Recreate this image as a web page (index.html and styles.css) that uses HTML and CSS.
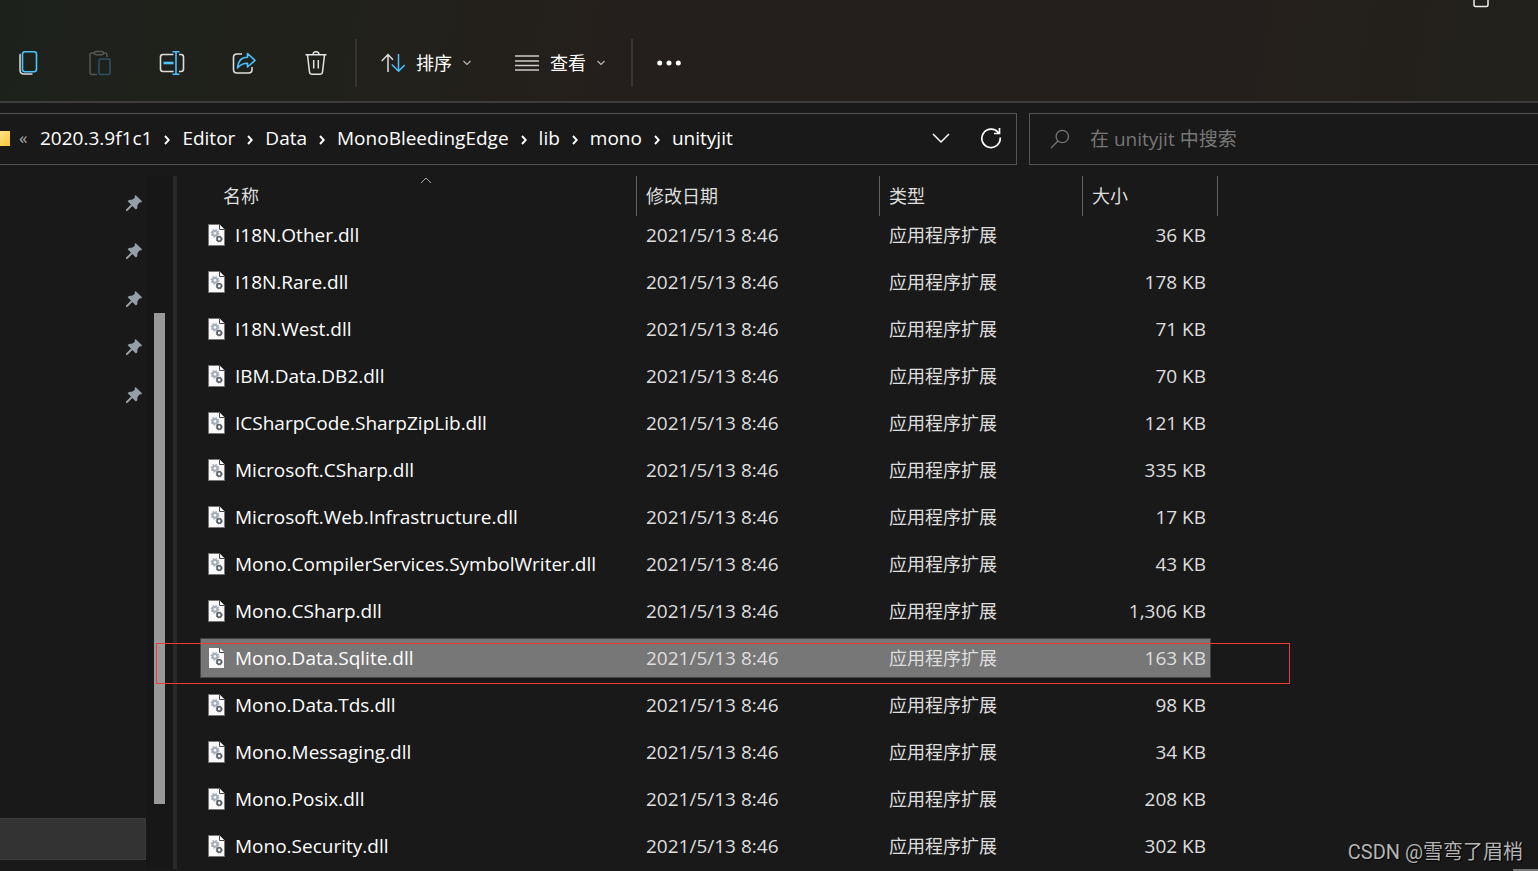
FILE: index.html
```html
<!DOCTYPE html>
<html lang="zh-CN">
<head>
<meta charset="utf-8">
<meta name="viewport" content="width=device-width, initial-scale=1">
<title>unityjit</title>
<link rel="stylesheet" href="styles.css">
</head>
<body>
<svg class="defs" aria-hidden="true">
  <symbol id="pin" viewBox="0 0 16 16"><path fill="#939ea6" d="M9.500 0 16 6.200 15 7.400 13.800 7.200 11.600 9.800 11.200 13.400 9.800 14.400 6.400 11 1.400 16H0V14.600L5 9.600 1.800 6.400 2.800 5 6.600 4.600 9 2.400 8.600 1.200Z"/></symbol>
  <symbol id="dll" viewBox="0 0 17 22">
    <path d="M.5.5H11.5L16.5 5.5V21.5H.5Z" fill="#fafafa" stroke="#777"/>
    <path d="M11.5.5V5.5H16.5" fill="#fff" stroke="#444"/>
    <circle cx="7" cy="9.3" r="2.4" fill="none" stroke="#a3adb8" stroke-width="2"/>
    <circle cx="7" cy="9.3" r="3.7" fill="none" stroke="#a3adb8" stroke-width="1.4" stroke-dasharray="1.5 1.4"/>
    <circle cx="11.2" cy="15" r="2.2" fill="#eee" stroke="#565e66" stroke-width="1.6"/>
    <circle cx="11.2" cy="15" r="3" fill="none" stroke="#565e66" stroke-width=".8" stroke-dasharray="1.2 1.2"/>
  </symbol>
  <symbol id="next" viewBox="0 0 6 10"><path d="M1 1 4.8 5 1 9" fill="none" stroke="#fff" stroke-width="1.9"/></symbol>
  <symbol id="down" viewBox="0 0 8 6"><path d="M.5 1 4 4.5 7.500 1" fill="none" stroke="#bbb" stroke-width="1.1"/></symbol>
</svg>
<main class="explorer">
  <header class="toolbar">
    <div class="titlebar"><svg class="maximize" viewBox="0 0 16 8"><path d="M1 0V5Q1 6.500 2.500 6.500H13.500Q15 6.500 15 5V0" fill="none" stroke="#eee" stroke-width="1.5"/></svg></div>
    <div class="commands">
      <button class="tool" aria-label="复制"><svg viewBox="0 0 26 26"><path d="M5.500 4Q5 4.500 5 6V20Q5 24 9 24H17.500" fill="none" stroke="#ddd" stroke-width="1.5"/><rect x="7.500" y="1.700" width="14" height="20" rx="2.500" fill="none" stroke="#4cc2ff" stroke-width="1.600"/></svg></button>
      <button class="tool" aria-label="粘贴"><svg viewBox="0 0 26 26" fill="none" stroke-width="1.500"><path d="M8 3H5Q3 3 3 5V22.500Q3 24.500 5 24.500H10M16 3H18Q20 3 20 5V7" stroke="#555852"/><rect x="7.500" y="1.500" width="9" height="3.200" rx="1.600" stroke="#555852"/><rect x="12" y="9" width="11" height="15.500" rx="1.500" stroke="#2f5265"/></svg></button>
      <button class="tool" aria-label="重命名"><svg viewBox="0 0 26 26" fill="none" stroke-width="1.600"><path d="M14.500 4.500H4Q1.500 4.500 1.500 7V19Q1.500 21.500 4 21.500H14.500M20 4.500H22Q24.500 4.500 24.500 7V19Q24.500 21.500 22 21.500H20" stroke="#ddd"/><path d="M17 2V24M13.500 1.800H20.500M13.500 24.200H20.500" stroke="#4cc2ff"/><path d="M4.500 13H14.500" stroke="#4cc2ff" stroke-width="2.600"/></svg></button>
      <button class="tool" aria-label="共享"><svg viewBox="0 0 26 26" fill="none" stroke-width="1.600"><path d="M11 4H6Q2.500 4 2.500 7.500V19.500Q2.500 23 6 23H17.500Q21 23 21 19.500V17" stroke="#ddd"/><path d="M16.500 3.500 24 10.300 16.500 17V13.300Q10.500 13.300 6.500 18Q7.500 7.300 16.500 7.300Z" stroke="#4cc2ff" stroke-linejoin="round"/></svg></button>
      <button class="tool" aria-label="删除"><svg viewBox="0 0 26 26" fill="none" stroke="#e4e4e4" stroke-width="1.500"><path d="M2.500 4.800H23.500M4.500 5 6.500 22Q6.800 24.300 9 24.300H17Q19.200 24.300 19.500 22L21.500 5M10 4.800Q10 1.800 13 1.800T16 4.800M10.700 10V18.500M15.300 10V18.500"/></svg></button>
      <span class="rule"></span>
      <button class="menu sort"><svg class="glyph" viewBox="0 0 24 20" fill="none" stroke-width="1.500"><path d="M7 19V1.500M.7 8 7 1.500 12 6.700" stroke="#ddd"/><path d="M17.500 1V18M10.800 11.500 17.500 18.300 23.700 12" stroke="#4cc2ff"/></svg><span>排序</span><svg class="caret"><use href="#down"/></svg></button>
      <button class="menu view"><svg class="glyph" viewBox="0 0 24 20"><path d="M0 3H24M0 8H24M0 12.500H24M0 17H24" stroke="#ccc" stroke-width="1.400"/></svg><span>查看</span><svg class="caret"><use href="#down"/></svg></button>
      <span class="rule"></span>
      <button class="more" aria-label="查看更多"><svg viewBox="0 0 24 6" fill="#fff"><circle cx="2.700" cy="3" r="2.500"/><circle cx="12" cy="3" r="2.500"/><circle cx="21.300" cy="3" r="2.500"/></svg></button>
    </div>
  </header>
  <div class="location">
    <nav class="address" aria-label="路径">
      <span class="folder"></span><span class="overflow">«</span>
      <a href="#">2020.3.9f1c1</a><svg class="sep"><use href="#next"/></svg>
      <a href="#">Editor</a><svg class="sep"><use href="#next"/></svg>
      <a href="#">Data</a><svg class="sep"><use href="#next"/></svg>
      <a href="#">MonoBleedingEdge</a><svg class="sep"><use href="#next"/></svg>
      <a href="#">lib</a><svg class="sep"><use href="#next"/></svg>
      <a href="#">mono</a><svg class="sep"><use href="#next"/></svg>
      <a href="#">unityjit</a>
      <span class="actions">
        <button aria-label="历史记录"><svg class="history" viewBox="0 0 18 12"><path d="M1 2 9 10 17 2" fill="none" stroke="#fff" stroke-width="1.500"/></svg></button>
        <button aria-label="刷新"><svg class="refresh" viewBox="0 0 22 22" fill="none" stroke="#fff" stroke-width="1.700"><path d="M18.500 6A9.200 9.200 0 1 0 20.200 10.500M19.500 1V6.500H14"/></svg></button>
      </span>
    </nav>
    <label class="search"><svg viewBox="0 0 20 20" fill="none" stroke="#777" stroke-width="1.300"><circle cx="12.300" cy="7.500" r="6.200"/><path d="M8 12 1 19"/></svg><input type="text" aria-label="搜索" placeholder="在 unityjit 中搜索"></label>
  </div>
  <div class="content">
    <aside class="sidebar">
      <div class="pins"><svg><use href="#pin"/></svg><svg><use href="#pin"/></svg><svg><use href="#pin"/></svg><svg><use href="#pin"/></svg><svg><use href="#pin"/></svg></div>
      <div class="current"></div>
    </aside>
    <div class="track"><div class="thumb"></div></div>
    <section class="files">
      <table>
        <thead><tr><th>名称<svg class="ascending" viewBox="0 0 12 7"><path d="M1 6 6 1 11 6" fill="none" stroke="#aaa"/></svg></th><th>修改日期</th><th>类型</th><th>大小</th></tr></thead>
        <tbody>
          <tr><td><svg><use href="#dll"/></svg>I18N.Other.dll</td><td>2021/5/13 8:46</td><td>应用程序扩展</td><td>36 KB</td></tr>
          <tr><td><svg><use href="#dll"/></svg>I18N.Rare.dll</td><td>2021/5/13 8:46</td><td>应用程序扩展</td><td>178 KB</td></tr>
          <tr><td><svg><use href="#dll"/></svg>I18N.West.dll</td><td>2021/5/13 8:46</td><td>应用程序扩展</td><td>71 KB</td></tr>
          <tr><td><svg><use href="#dll"/></svg>IBM.Data.DB2.dll</td><td>2021/5/13 8:46</td><td>应用程序扩展</td><td>70 KB</td></tr>
          <tr><td><svg><use href="#dll"/></svg>ICSharpCode.SharpZipLib.dll</td><td>2021/5/13 8:46</td><td>应用程序扩展</td><td>121 KB</td></tr>
          <tr><td><svg><use href="#dll"/></svg>Microsoft.CSharp.dll</td><td>2021/5/13 8:46</td><td>应用程序扩展</td><td>335 KB</td></tr>
          <tr><td><svg><use href="#dll"/></svg>Microsoft.Web.Infrastructure.dll</td><td>2021/5/13 8:46</td><td>应用程序扩展</td><td>17 KB</td></tr>
          <tr><td><svg><use href="#dll"/></svg>Mono.CompilerServices.SymbolWriter.dll</td><td>2021/5/13 8:46</td><td>应用程序扩展</td><td>43 KB</td></tr>
          <tr><td><svg><use href="#dll"/></svg>Mono.CSharp.dll</td><td>2021/5/13 8:46</td><td>应用程序扩展</td><td>1,306 KB</td></tr>
          <tr class="selected"><td><svg><use href="#dll"/></svg>Mono.Data.Sqlite.dll</td><td>2021/5/13 8:46</td><td>应用程序扩展</td><td>163 KB<span class="marker"></span></td></tr>
          <tr><td><svg><use href="#dll"/></svg>Mono.Data.Tds.dll</td><td>2021/5/13 8:46</td><td>应用程序扩展</td><td>98 KB</td></tr>
          <tr><td><svg><use href="#dll"/></svg>Mono.Messaging.dll</td><td>2021/5/13 8:46</td><td>应用程序扩展</td><td>34 KB</td></tr>
          <tr><td><svg><use href="#dll"/></svg>Mono.Posix.dll</td><td>2021/5/13 8:46</td><td>应用程序扩展</td><td>208 KB</td></tr>
          <tr><td><svg><use href="#dll"/></svg>Mono.Security.dll</td><td>2021/5/13 8:46</td><td>应用程序扩展</td><td>302 KB</td></tr>
        </tbody>
      </table>
    </section>
  </div>
  <p class="watermark">CSDN @雪弯了眉梢</p>
  <span class="corner"></span>
</main>
</body>
</html>
```
FILE: styles.css
```css
* { box-sizing: border-box; }
body {
  margin: 0;
  background: #191919;
  color: #fff;
  font: 19px/28px "Open Sans", "Noto Sans CJK SC", sans-serif;
}
button, input { font: inherit; color: inherit; background: none; border: 0; padding: 0; margin: 0; }
svg { display: block; flex: none; }
.defs { position: absolute; width: 0; height: 0; }
.explorer { position: relative; display: flex; flex-direction: column; height: 100vh; overflow: hidden; }

.toolbar {
  background: linear-gradient(100deg, #1d211c 0%, #21211b 22%, #241f1c 40%, #241f1c 80%, #22211c 100%);
  border-bottom: 2px solid #3c3b3a;
}
.titlebar { display: flex; justify-content: flex-end; height: 27px; padding-right: 49px; }
.maximize { width: 16px; height: 8px; }
.commands { display: flex; align-items: center; height: 74px; padding: 0 4px 2px; }
.tool { display: flex; align-items: center; justify-content: center; width: 48px; height: 48px; margin-right: 24px; }
.tool svg { width: 26px; height: 26px; }
.rule { width: 2px; height: 48px; background: #363431; }
.tool + .rule { margin-left: -9px; }
.menu { display: flex; align-items: center; font-size: 18px; white-space: nowrap; }
.glyph { width: 24px; height: 20px; margin-right: 11px; }
.caret { width: 8px; height: 6px; margin-left: 11px; }
.sort { margin-left: 24px; }
.view { margin: 0 26px 0 44px; }
.more { margin-left: 24px; }
.more svg { width: 24px; height: 6px; }

.location { display: grid; grid-template-columns: 1017fr 509fr; flex: none; gap: 12px; padding: 10px 0 11px; }
.address {
  display: flex;
  align-items: center;
  min-width: 0;
  height: 52px;
  padding-bottom: 2px;
  border: 1px solid #535353;
  border-left: 0;
  white-space: nowrap;
}
.address a { color: #fff; text-decoration: none; }
.folder { width: 10px; height: 15px; background: linear-gradient(135deg, #ffe08a, #ffc933); }
.overflow { width: 30px; padding-left: 9px; color: #aaa; font-size: 17px; }
.sep { width: 6px; height: 10px; margin: 3px 12px 0; }
.actions { display: flex; align-items: center; gap: 30px; margin-left: auto; padding-right: 14px; }
.history { width: 18px; height: 12px; }
.refresh { width: 22px; height: 22px; }
.search {
  display: flex;
  align-items: center;
  gap: 20px;
  min-width: 0;
  height: 52px;
  padding-left: 20px;
  border: 1px solid #535353;
  border-right: 0;
}
.search svg { width: 20px; height: 20px; }
.search input { flex: 1; min-width: 0; outline: 0; }
.search input::placeholder { color: #777; opacity: 1; }

.content { display: flex; flex: 1; min-height: 0; padding-bottom: 2px; }
.sidebar { display: flex; flex-direction: column; justify-content: space-between; flex: none; width: 146px; padding: 19px 0 9px; }
.pins { display: flex; flex-direction: column; align-items: flex-end; gap: 32px; padding-right: 4px; }
.pins svg { width: 16px; height: 16px; }
.current { height: 42px; background: #333; border: 1px solid #3a3a3a; border-left: 0; }
.track { flex: none; width: 31px; padding: 137px 8px 65px; background: #171717; border-right: 4px solid #292929; }
.thumb { width: 11px; height: 100%; background: #999; }
.files { flex: 1; min-width: 0; padding-left: 23px; }

table, thead, tbody { display: block; }
tr { display: grid; grid-template-columns: 437px 243px 203px 128px; width: max-content; }
thead tr { grid-template-columns: 437px 243px 203px 135px; }
th { position: relative; height: 40px; padding: 6px 9px 0; border-right: 1px solid #636363; font-size: 18px; font-weight: 400; text-align: left; color: #dedede; }
th:first-child { padding-left: 23px; }
.ascending { position: absolute; left: 220px; top: 1px; width: 12px; height: 7px; }
tbody tr { height: 40px; margin-bottom: 7px; }
tbody { margin-top: -1px; }
td { display: flex; align-items: center; padding: 0 0 1px 9px; color: #dedede; white-space: nowrap; }
td:first-child { padding-left: 8px; color: #fff; }
td:nth-child(3) { font-size: 18px; }
td:last-child { justify-content: flex-end; padding-right: 5px; }
td svg { width: 17px; height: 22px; margin-right: 10px; }
.selected { position: relative; background: #777; outline: 1px solid #444; outline-offset: -1px; }
.marker { position: absolute; top: 5px; left: -44px; right: -79px; height: 41px; border: 1px solid #f03a36; }

.watermark { position: absolute; right: 15px; bottom: 5px; margin: 0; font: 20px/28px Roboto, "Noto Sans CJK SC", sans-serif; color: #b5b5b5; text-shadow: 1px 1px 1px #000; }
.corner { position: absolute; right: 0; bottom: 0; width: 25px; height: 2px; background: #777; }
```
